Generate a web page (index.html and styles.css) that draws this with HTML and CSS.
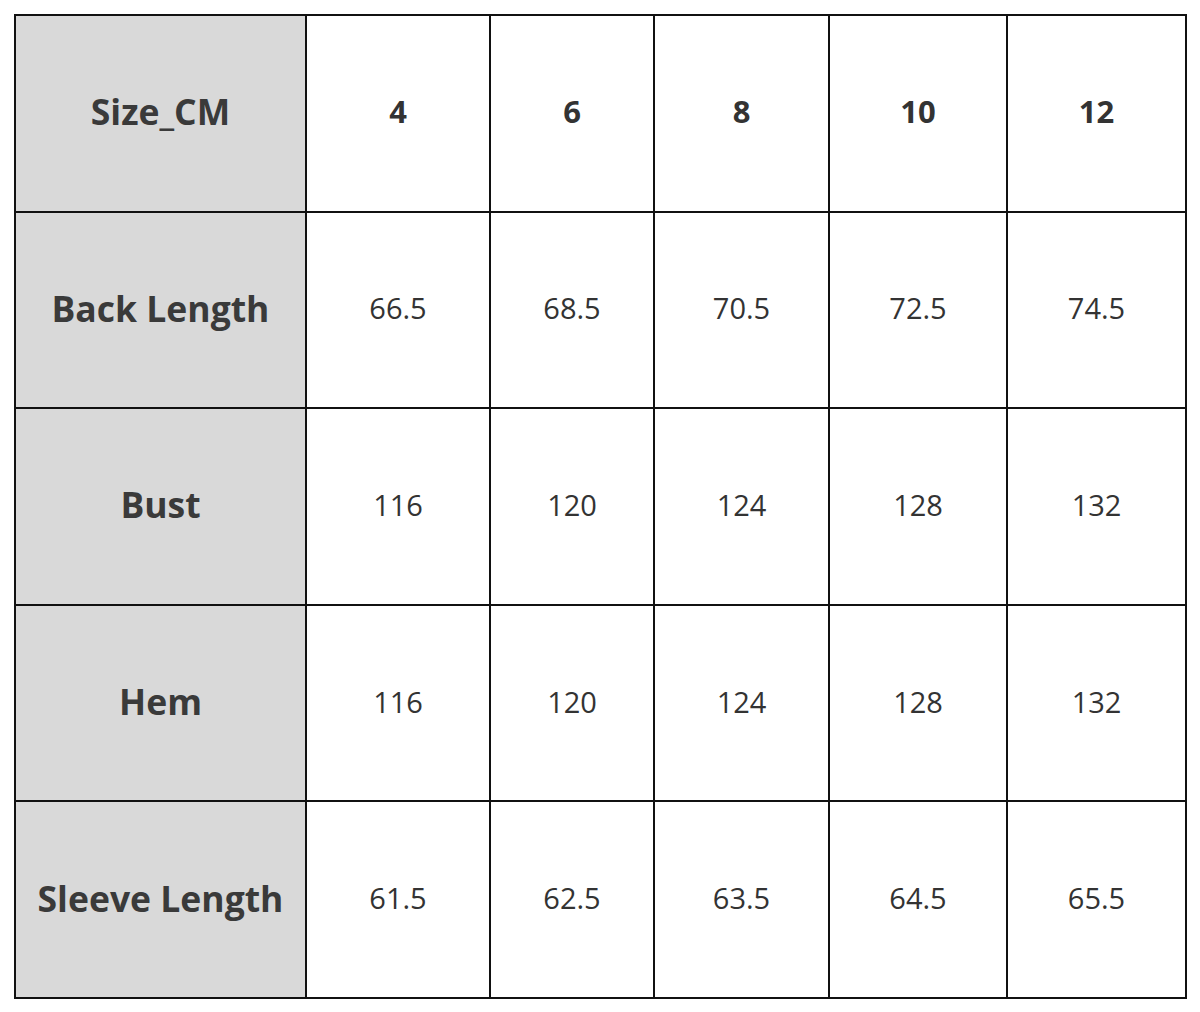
FILE: index.html
```html
<!DOCTYPE html>
<html>
<head>
<meta charset="utf-8">
<link rel="stylesheet" href="styles.css">
</head>
<body>
<table class="size-table">
  <colgroup>
    <col class="c0"><col class="c1"><col class="c2"><col class="c3"><col class="c4"><col class="c5">
  </colgroup>
  <tr>
    <th class="label">Size_CM</th>
    <th>4</th><th>6</th><th>8</th><th>10</th><th>12</th>
  </tr>
  <tr>
    <th class="label">Back Length</th>
    <td>66.5</td><td>68.5</td><td>70.5</td><td>72.5</td><td>74.5</td>
  </tr>
  <tr>
    <th class="label">Bust</th>
    <td>116</td><td>120</td><td>124</td><td>128</td><td>132</td>
  </tr>
  <tr>
    <th class="label">Hem</th>
    <td>116</td><td>120</td><td>124</td><td>128</td><td>132</td>
  </tr>
  <tr>
    <th class="label">Sleeve Length</th>
    <td>61.5</td><td>62.5</td><td>63.5</td><td>64.5</td><td>65.5</td>
  </tr>
</table>
</body>
</html>
```
FILE: styles.css
```css
html, body {
  margin: 0;
  padding: 0;
  background: #ffffff;
}
body {
  padding: 14px 0 0 14px;
  font-family: "Open Sans", "Noto Sans", sans-serif;
  color: #333333;
}
.size-table {
  border-collapse: collapse;
  table-layout: fixed;
  width: 1171px;
  border: 2px solid #111111;
}
.c0 { width: 291px; }
.c1 { width: 184px; }
.c2 { width: 164px; }
.c3 { width: 175px; }
.c4 { width: 178px; }
.c5 { width: 179px; }
.size-table tr { height: 196.6px; }
.size-table th,
.size-table td {
  border: 2px solid #111111;
  text-align: center;
  vertical-align: middle;
  padding: 0 0 4px 0;
}
.size-table th {
  font-weight: 700;
  font-size: 31px;
}
.size-table td {
  font-weight: 400;
  font-size: 29px;
}
.size-table th.label {
  background: #d9d9d9;
  font-size: 35.5px;
  color: #3a3a3a;
}
```
